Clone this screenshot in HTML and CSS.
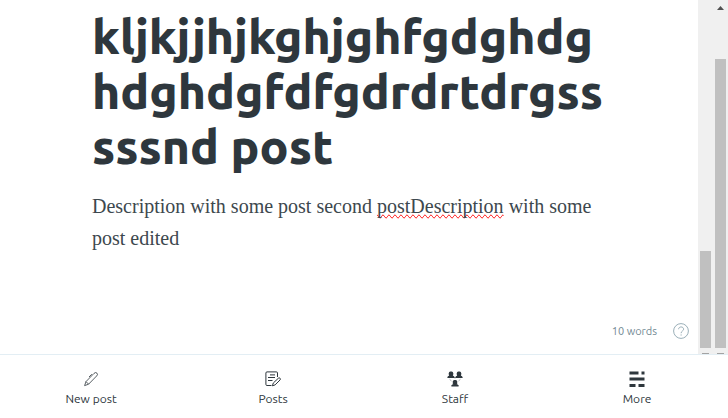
FILE: index.html
```html
<!DOCTYPE html>
<html lang="en">
<head>
<meta charset="utf-8">
<meta name="viewport" content="width=device-width, initial-scale=1">
<title>Editor</title>
<link rel="stylesheet" href="styles.css">
</head>
<body>
<main class="editor">
  <div class="page">
    <article class="post">
      <h1 class="title">kljkjjhjkghjghfgdghdg<wbr>hdghdgfdfgdrdrtdrgss<wbr>sssnd post</h1>
      <p class="text">Description with some post second <span class="misspelt">postDescription</span> with some post edited</p>
    </article>
    <footer class="status">
      <span>10 words</span>
      <button class="help" type="button" aria-label="Help">
        <svg width="16" height="16" viewBox="0 0 16 16" fill="none" stroke="currentColor"><circle cx="8" cy="8" r="7.4"/><path d="M5.6 6.2C5.6 3.2 10.6 3.2 10.6 6.2C10.6 8 8.1 8 8.1 10.2M8.1 11.4v1.2"/></svg>
      </button>
    </footer>
  </div>
  <div class="scrollbar inner"><i class="thumb"></i><i class="dash"></i></div>
  <div class="scrollbar outer"><i class="arrow"></i><i class="thumb"></i><i class="dash"></i></div>
</main>
<nav class="nav">
  <a href="#new">
    <svg width="16" height="16" viewBox="0 0 16 16" fill="none" stroke="currentColor" stroke-width=".8"><path d="M1.6 14.6L3 10.6L11 2.4Q12.6 .8 14 2.2Q15.2 3.6 13.6 5L5.6 13.2ZM3 10.6L5.6 13.2M8.8 3.2L6 6"/></svg>
    New post
  </a>
  <a href="#posts">
    <svg width="16" height="16" viewBox="0 0 16 16" fill="none" stroke="currentColor"><path d="M6.5 14.5H2Q.9 14.5 .9 13.4V2Q.9 .9 2 .9H11.4Q12.5 .9 12.5 2V6M5 3.9H10M3 6.5H10M3 9.5H7.5"/><path d="M7.4 14.8L8.3 12L13.4 7.2Q14.4 6.5 15.1 7.3Q15.8 8.1 15.1 8.9L10.1 13.9Z"/></svg>
    Posts
  </a>
  <a href="#staff">
    <svg width="16" height="16" viewBox="0 0 16 16" fill="currentColor"><g id="person"><rect x="1.8" y=".6" width="4.4" height="4.8" rx="1.6"/><path d="M.4 7V6Q.8 5 3 4.6H5Q7.2 5 7.6 6V7Z"/></g><use href="#person" x="8"/><use href="#person" x="4" y="8.4"/><path d="M2.5 8.2L4.5 10M13.5 8.2L11.5 10M7 6.8H9" stroke="currentColor" stroke-width=".4"/></svg>
    Staff
  </a>
  <a href="#more">
    <svg width="16" height="16" viewBox="0 0 16 16" fill="currentColor"><path d="M.5 .5H9.5V3.5H.5ZM12.5 .5H15.5V3.5H12.5ZM.5 6.5H15.5V9.5H.5ZM.5 13H6.5V16H.5ZM9.5 13H15.5V16H9.5Z"/></svg>
    More
  </a>
</nav>
</body>
</html>
```
FILE: styles.css
```css
* {
  box-sizing: border-box;
}

body {
  display: flex;
  flex-direction: column;
  height: 100vh;
  margin: 0;
  overflow: hidden;
  background: #fff;
  color: #2e373d;
  font-family: Ubuntu, "Noto Sans", sans-serif;
}

.editor {
  display: flex;
  flex: 1;
  min-height: 0;
}

.page {
  display: flex;
  flex: 1;
  flex-direction: column;
  justify-content: space-between;
  min-width: 0;
}

.post {
  padding: 9px 84px 0 92px;
}

.title {
  margin: 0 0 16px;
  font-size: 48px;
  font-weight: 800;
  line-height: 55px;
}

.text {
  margin: 0;
  color: #3d484e;
  font-family: "Liberation Serif", serif;
  font-size: 20px;
  line-height: 32px;
}

.misspelt {
  text-decoration-line: spelling-error;
}

.status {
  display: flex;
  align-items: center;
  justify-content: flex-end;
  gap: 16px;
  padding: 0 9px 15px 0;
  color: #738a94;
  font-size: 11px;
  line-height: 16px;
}

.help {
  display: flex;
  padding: 0;
  border: 0;
  background: none;
  color: #9aafb8;
}

.scrollbar {
  display: flex;
  flex-direction: column;
  align-items: center;
  gap: 5px;
  width: 15px;
  background: #f0f0f0;
}

.thumb {
  width: 11px;
  background: #c0c0c0;
}

.inner .thumb {
  height: 97px;
  margin-top: auto;
}

.outer .thumb {
  flex: 1;
}

.arrow {
  width: 7px;
  height: 4px;
  margin: 6px 0 44px;
  background: #505050;
  clip-path: polygon(50% 0, 100% 100%, 0 100%);
}

.dash {
  width: 7px;
  height: 1px;
  background: #a3a3a3;
}

.nav {
  display: grid;
  grid-template-columns: repeat(4, 1fr);
  height: 64px;
  border-top: 1px solid #e3eef4;
}

.nav a {
  display: flex;
  flex-direction: column;
  align-items: center;
  gap: 4px;
  padding-top: 16px;
  color: #2e373d;
  font-size: 12px;
  line-height: 16px;
  text-decoration: none;
}
```
